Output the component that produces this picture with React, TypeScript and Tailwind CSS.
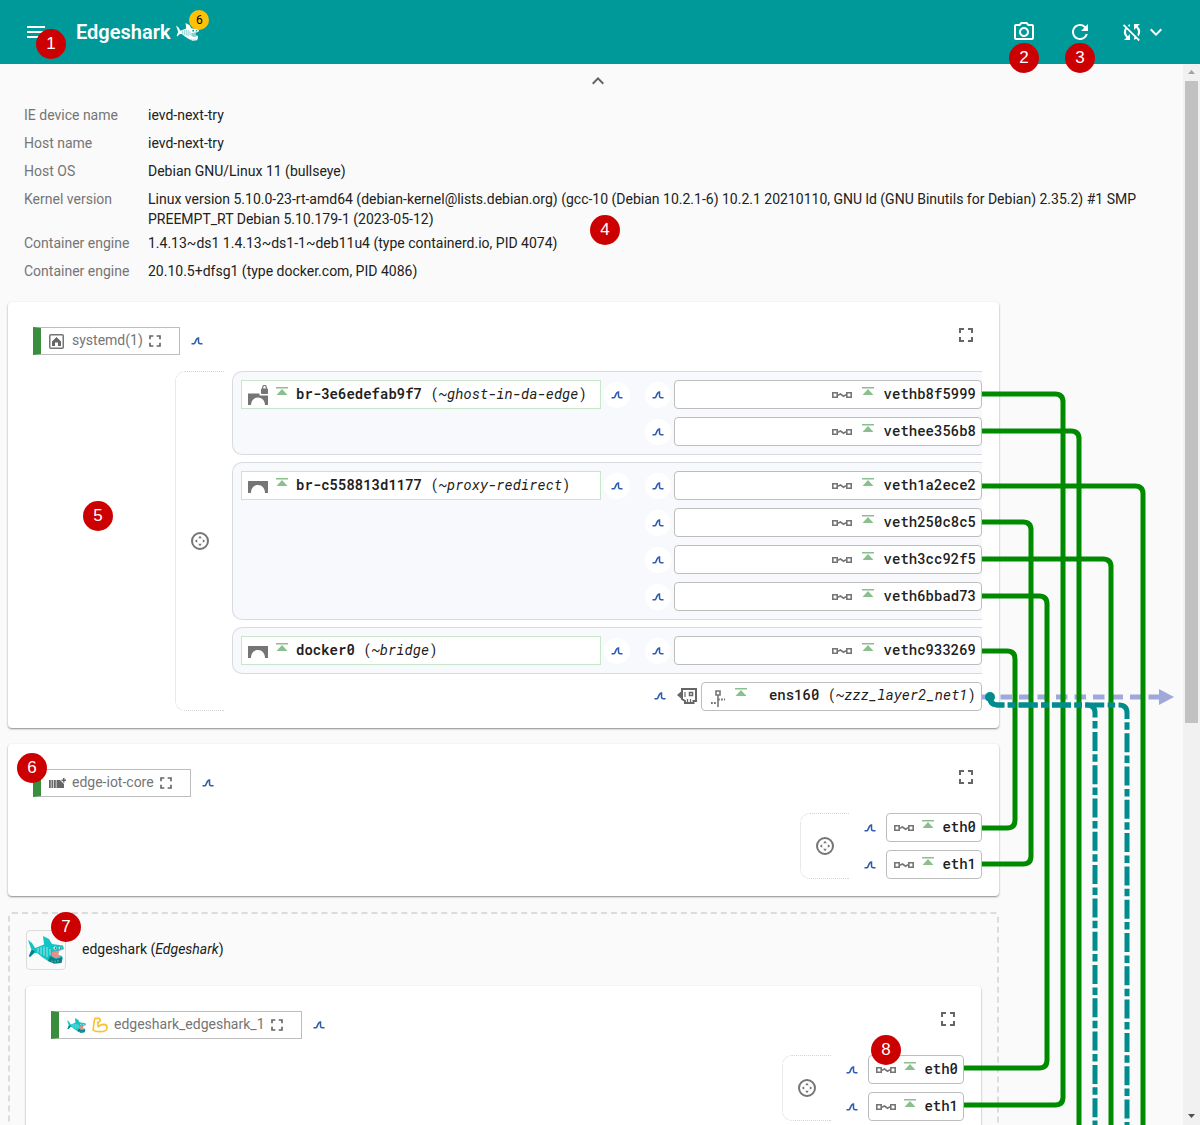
import type { ReactNode } from "react";
import {
  MdExpandLess,
  MdExpandMore,
  MdFullscreen,
  MdMenu,
  MdOutlinePhotoCamera,
  MdRefresh,
  MdSyncDisabled,
} from "react-icons/md";

const mono = "font-['Roboto_Mono','DejaVu_Sans_Mono',monospace]";

function Callout({ n, className }: { n: number; className: string }) {
  return (
    <span
      className={`absolute z-20 flex size-[30px] items-center justify-center rounded-full bg-[#cc0000] font-['Liberation_Sans',sans-serif] text-[17px] leading-4 text-white ${className}`}
    >
      {n}
    </span>
  );
}

function SharkIcon({ className, plain = false }: { className: string; plain?: boolean }) {
  const body = plain ? "#ffffff" : "#14c4c4";
  const stripe = plain ? "#009999" : "#d8f6f6";
  return (
    <svg viewBox="0 0 36 28" className={className} aria-hidden="true">
      <path
        d="M0 4 4 7 7 12 11 10.500 16 8.500 15 0 21 3 24 8 35 9.500 36 13 31 15 30 19 34 20 34.500 23 33 27 26 27.500 20 25 14 21 9 17 6 17 2 21 1 20 3.500 14Z"
        fill={body}
      />
      {!plain && <path d="M22 20 28 23 34.500 21 33.500 27 26 27.500 20 25ZM3.500 14l3.500 1-1 2-4 4-1-1Z" fill="#0a7f86" />}
      <path d="M24 16 32 14 30 17.500 32 21.500 27 22 24 20Z" fill={plain ? "#8cd0d0" : "#f08a8a"} />
      <path d="M10 12v4.500M13 11v7.500M16 10.500v9M19 11v10M22 13v6" stroke={stripe} strokeWidth="1" opacity="0.7" />
      <path d="M24 24.500v2M27 24.500v2M30 24v2" stroke={stripe} strokeWidth="0.800" opacity="0.6" />
      <circle cx="27" cy="12" r="1.500" fill={plain ? stripe : "#ffffff"} />
      <circle cx="32" cy="12" r="1.300" fill={plain ? stripe : "#ffffff"} />
      {!plain && <path d="M26.800 11.600h1.200v1.200h-1.200zM31.800 11.600h1.100v1.100h-1.100z" fill="#222222" />}
    </svg>
  );
}

function ArmIcon() {
  return (
    <svg viewBox="0 0 24 24" className="size-4 text-[#fbc02d]" fill="none" stroke="currentColor" strokeWidth="2.400" strokeLinejoin="round" aria-hidden="true">
      <path d="M4.500 2H11L12.500 5 10.500 8 8.500 8 9.500 15C11.500 12 14.500 11 18 11 21 11 22.500 13 22.500 16 22.500 20 18 22 12 22 7 22 2.500 21 1.500 19 3 13 2.500 7 4.500 2Z" />
    </svg>
  );
}

function HomeIcon() {
  return (
    <svg viewBox="0 0 15 15" className="size-[15px]" aria-hidden="true">
      <rect x="0.750" y="0.750" width="13.500" height="13.500" rx="1" fill="none" stroke="#757575" strokeWidth="1.500" />
      <path d="M3 7.500 7.500 3 12 7.500V12H9V8.500H6V12H3Z" fill="#666666" />
    </svg>
  );
}

function ContainerIcon() {
  return (
    <svg viewBox="0 0 17 11" className="h-[11px] w-[17px]" fill="#666666" aria-hidden="true">
      <path d="M0 2h1.800v8H0zM2.500 2h1.800v8H2.500zM5 2h1.800v8H5zM7.500 2H11L15 6v4H7.500zM14 0h1.500v1.500H17V3h-1.500v1.500H14V3h-1.500V1.500H14z" />
    </svg>
  );
}

function UpIcon() {
  return (
    <svg viewBox="0 0 12 8" className="mb-2 h-2 w-3 shrink-0" fill="#8bbf8d" aria-hidden="true">
      <path d="M0 0H12V1.500H0ZM6 2 11.500 8H0.500Z" />
    </svg>
  );
}

function VethIcon() {
  return (
    <svg viewBox="0 0 20 6" className="h-1.5 w-5 shrink-0" fill="none" stroke="#757575" strokeWidth="1.600" aria-hidden="true">
      <path d="M0.800 0.800H5.200V5.200H0.800ZM14.800 0.800H19.200V5.200H14.800ZM5.200 3H6.500L8.500 2 11.500 4.200 13.500 3H14.800" />
    </svg>
  );
}

function BridgeIcon({ locked = false }: { locked?: boolean }) {
  return (
    <svg viewBox="0 0 20 20" className="size-5 shrink-0" fill="#757575" aria-hidden="true">
      {locked ? (
        <>
          <path d="M0 8.500H11.500V10.500H20V20.500H17C17 15.500 14 12.500 10 12.500S3 15.500 3 20.500H0Z" />
          <rect x="13" y="3.500" width="7" height="5.500" rx="0.800" />
          <path d="M14.700 4V2.300a1.800 1.800 0 0 1 3.600 0V4" fill="none" stroke="#757575" strokeWidth="1.200" />
        </>
      ) : (
        <path d="M0 5H20V17H17C17 12.500 14 9 10 9S3 12.500 3 17H0Z" />
      )}
    </svg>
  );
}

function NicIcon() {
  return (
    <svg viewBox="0 0 20 16" className="h-4 w-5 shrink-0" fill="none" stroke="#666666" aria-hidden="true">
      <path d="M5 1H19V13H16.500V15H8V13L5 11Z" strokeWidth="2" />
      <path d="M0 7 4 3.500V10.500Z" fill="#666666" stroke="none" />
      <path d="M12.500 4.500H15.500V7.500H12.500Z" strokeWidth="1.500" />
      <path d="M8 4V9M10.500 11V14M13.500 11V14" strokeWidth="1.200" />
    </svg>
  );
}

function VlanIcon() {
  return (
    <svg viewBox="0 0 14 17" className="mt-1 h-[17px] w-3.5 shrink-0" fill="none" stroke="#757575" aria-hidden="true">
      <path d="M5 1H9V5H5Z" strokeWidth="1.600" />
      <path d="M7 5V17" strokeWidth="1.600" />
      <path d="M7 9.500H14M0 13H6" strokeWidth="1.800" strokeDasharray="1.800 1.200" />
    </svg>
  );
}

function NetnsIcon() {
  return (
    <svg viewBox="0 0 18 18" className="size-[18px]" aria-hidden="true">
      <circle cx="9" cy="9" r="8" fill="none" stroke="#757575" strokeWidth="2" />
      <path d="M9 3.800 10.800 6.200H7.200ZM9 14.200 10.800 11.800H7.200ZM3.800 9 6.200 7.200V10.800ZM14.200 9 11.800 7.200V10.800Z" fill="#757575" />
    </svg>
  );
}

function CaptureButton({ label }: { label: string }) {
  return (
    <button aria-label={`Capture from ${label}`} className="flex size-[26px] shrink-0 items-center justify-center rounded-full bg-white">
      <svg viewBox="0 0 12 8" className="h-2 w-3" fill="none" stroke="#2f5bae" strokeWidth="1.500" aria-hidden="true">
        <path d="M0.500 6.800H3C4.500 6.500 4.500 1.200 7.500 1V4.800C7.500 6.300 8.200 6.800 9.300 6.800H11.500" />
      </svg>
    </button>
  );
}

function Name({ name, alias, strong = false }: { name: string; alias?: string; strong?: boolean }) {
  return (
    <span className="pb-0.5 whitespace-pre">
      <b className={strong ? "font-semibold" : "font-medium"}>{name}</b>
      {alias && (
        <>
          {" ("}
          <i>~{alias}</i>)
        </>
      )}
    </span>
  );
}

function Port({ name, wide = false }: { name: string; wide?: boolean }) {
  return (
    <div className="flex items-center gap-[3px]">
      <CaptureButton label={name} />
      <div
        className={`flex h-[29px] items-center justify-end rounded-[4px] border border-[#bdbdbd] bg-white pr-[5px] ${wide ? "w-[308px] gap-2.5" : "w-24 gap-2"}`}
      >
        <VethIcon />
        <UpIcon />
        <Name name={name} />
      </div>
    </div>
  );
}

function Bridge({ name, alias, ports, locked }: { name: string; alias: string; ports: string[]; locked?: boolean }) {
  return (
    <section className="flex items-start justify-between rounded-l-[10px] border border-r-0 border-[#d8dae0] bg-[#f7f9fd] py-2 pl-2">
      <div className="flex items-center gap-[3px]">
        <div className="flex h-[29px] w-[360px] items-center gap-2 border border-[#c8e6c9] bg-white pl-1.5">
          <BridgeIcon locked={locked} />
          <UpIcon />
          <Name name={name} alias={alias} strong />
        </div>
        <CaptureButton label={name} />
      </div>
      <div className="flex flex-col gap-2">
        {ports.map((p) => (
          <Port key={p} name={p} wide />
        ))}
      </div>
    </section>
  );
}

function NetnsCard({
  icon,
  name,
  children,
  callout,
}: {
  icon: ReactNode;
  name: string;
  children: ReactNode;
  callout?: ReactNode;
}) {
  return (
    <section className="relative rounded-[4px] bg-white pt-[25px] pr-[17px] pb-[17px] pl-[25px] shadow-[0_1px_2px_rgba(0,0,0,0.45)]">
      {callout}
      <div className="mb-4 flex h-7 items-start justify-between">
        <div className="flex items-center gap-1">
          <button className="flex h-7 items-center border border-l-8 border-[#bdbdbd] border-l-[#388e3c] pr-3.5 pl-2 text-sm text-[#757575]">
            <span className="flex min-w-[23px] items-center gap-1.5 pr-1.5">{icon}</span>
            <span className="pr-0.5 pb-0.5">{name}</span>
            <MdFullscreen className="size-5 text-[#666666]" />
          </button>
          <CaptureButton label={name} />
        </div>
        <button aria-label={`Show only ${name}`} className="mr-1 -mt-1 text-[#666666]">
          <MdFullscreen className="size-6" />
        </button>
      </div>
      <div className="flex justify-end gap-2">
        <div className="flex w-[49px] items-center justify-center rounded-l-[10px] border border-r-0 border-dotted border-[#d4d4d4]">
          <NetnsIcon />
        </div>
        {children}
      </div>
    </section>
  );
}

const wires = [
  "M982 394H1055Q1063 394 1063 402V1097Q1063 1105 1055 1105H964",
  "M982 431H1071Q1079 431 1079 439V1125",
  "M982 486H1135Q1143 486 1143 494V1125",
  "M982 522H1023Q1031 522 1031 530V856Q1031 864 1023 864H982",
  "M982 559H1103Q1111 559 1111 567V1125",
  "M982 596H1039Q1047 596 1047 604V1060Q1047 1068 1039 1068H964",
  "M982 651H1007Q1015 651 1015 659V820Q1015 828 1007 828H982",
];

function Wires() {
  return (
    <svg viewBox="963 302 220 823" className="pointer-events-none absolute top-0 right-0 h-[823px] w-[220px]" fill="none" aria-hidden="true">
      <path d="M982 697H1159" stroke="#9fa8da" strokeWidth="5" strokeDasharray="11.500 7" />
      <path d="M1159 689 1174 697 1159 705Z" fill="#9fa8da" />
      {wires.map((d) => (
        <path key={d} d={d} stroke="#008a00" strokeWidth="5" />
      ))}
      <g stroke="#008c8c" strokeWidth="5" strokeDasharray="19 3.400 7.500 3.400">
        <path d="M990 697Q990 705 998 705H1087Q1095 705 1095 713V1125" />
        <path d="M990 697Q990 705 998 705H1119Q1127 705 1127 713V1125" />
      </g>
      <circle cx="990" cy="697" r="5" fill="#008c8c" />
    </svg>
  );
}

const details: [string, string][] = [
  ["IE device name", "ievd-next-try"],
  ["Host name", "ievd-next-try"],
  ["Host OS", "Debian GNU/Linux 11 (bullseye)"],
  [
    "Kernel version",
    "Linux version 5.10.0-23-rt-amd64 (debian-kernel@lists.debian.org) (gcc-10 (Debian 10.2.1-6) 10.2.1 20210110, GNU ld (GNU Binutils for Debian) 2.35.2) #1 SMP PREEMPT_RT Debian 5.10.179-1 (2023-05-12)",
  ],
  ["Container engine", "1.4.13~ds1 1.4.13~ds1-1~deb11u4 (type containerd.io, PID 4074)"],
  ["Container engine", "20.10.5+dfsg1 (type docker.com, PID 4086)"],
];

export default function App() {
  return (
    <div className="flex h-screen flex-col bg-[#fafafa] font-['Roboto',sans-serif] text-sm text-[#212121]">
      <header className="flex h-16 shrink-0 items-center justify-between bg-[#009999] pr-9 pl-6 text-white">
        <div className="flex items-center">
          <button aria-label="Menu" className="relative">
            <MdMenu className="size-6" />
            <Callout n={1} className="top-[9px] left-3" />
          </button>
          <h1 className="ml-7 text-xl font-semibold">Edgeshark</h1>
          <span className="relative ml-1.5">
            <SharkIcon plain className="h-[18px] w-[23px]" />
            <span className="absolute -top-[13px] left-[13px] flex size-5 items-center justify-center rounded-full bg-[#ffc107] text-xs text-black">
              6
            </span>
          </span>
        </div>
        <div className="flex items-center">
          <button aria-label="Screenshot" className="relative mr-8">
            <MdOutlinePhotoCamera className="size-6" />
            <Callout n={2} className="top-[23px] -left-[3px]" />
          </button>
          <button aria-label="Refresh" className="relative mr-7">
            <MdRefresh className="size-6" />
            <Callout n={3} className="top-[23px] -left-[3px]" />
          </button>
          <button aria-label="Automatic refresh" className="-mr-1 flex items-center">
            <MdSyncDisabled className="size-6" />
            <MdExpandMore className="size-6" />
          </button>
        </div>
      </header>
      <div className="flex min-h-0 flex-1">
        <main className="min-w-0 flex-1 overflow-hidden">
          <div className="flex justify-center pt-[5px] pl-3">
            <button aria-label="Hide details" className="text-[#616161]">
              <MdExpandLess className="size-6" />
            </button>
          </div>
          <div className="relative mt-3 pr-4 pl-6">
            <dl className="flex flex-col leading-5">
              {details.map(([label, value], i) => (
                <div key={i} className={i === 3 ? "flex pb-1" : "flex pb-2"}>
                  <dt className="w-[124px] shrink-0 text-[#757575]">{label}</dt>
                  <dd>{value}</dd>
                </div>
              ))}
            </dl>
            <Callout n={4} className="top-[110px] left-[590px]" />
          </div>
          <div className="relative mt-[13px] pr-[184px] pl-2">
            <div className="flex flex-col gap-4">
              <NetnsCard icon={<HomeIcon />} name="systemd(1)" callout={<Callout n={5} className="top-[199px] left-[75px]" />}>
                <div className={`flex w-[750px] flex-col gap-[7px] ${mono}`}>
                  <Bridge name="br-3e6edefab9f7" alias="ghost-in-da-edge" ports={["vethb8f5999", "vethee356b8"]} locked />
                  <Bridge name="br-c558813d1177" alias="proxy-redirect" ports={["veth1a2ece2", "veth250c8c5", "veth3cc92f5", "veth6bbad73"]} />
                  <Bridge name="docker0" alias="bridge" ports={["vethc933269"]} />
                  <div className="flex h-[30px] items-center justify-end gap-1">
                    <CaptureButton label="ens160" />
                    <NicIcon />
                    <div className="flex h-[29px] w-[281px] items-center gap-2.5 rounded-[4px] border border-[#bdbdbd] bg-white pr-[5px] pl-[9px]">
                      <VlanIcon />
                      <UpIcon />
                      <span className="ml-auto flex">
                        <Name name="ens160" alias="zzz_layer2_net1" />
                      </span>
                    </div>
                  </div>
                </div>
              </NetnsCard>
              <NetnsCard icon={<ContainerIcon />} name="edge-iot-core" callout={<Callout n={6} className="top-[9px] left-[9px]" />}>
                <div className={`flex flex-col gap-2 ${mono}`}>
                  <Port name="eth0" />
                  <Port name="eth1" />
                </div>
              </NetnsCard>
              <section className="rounded-[4px] border-2 border-dashed border-[#dcdcdc] p-4">
                <div className="mb-4 flex items-center gap-4">
                  <div className="relative flex size-10 items-center justify-center rounded-[4px] border border-[#dcdcdc]">
                    <SharkIcon className="h-7 w-9" />
                    <Callout n={7} className="-top-[19px] left-6" />
                  </div>
                  <h2 className="pb-0.5">
                    edgeshark (<i>Edgeshark</i>)
                  </h2>
                </div>
                <NetnsCard
                  icon={
                    <>
                      <SharkIcon className="h-[15px] w-[19px]" />
                      <ArmIcon />
                    </>
                  }
                  name="edgeshark_edgeshark_1"
                >
                  <div className={`relative flex flex-col gap-2 ${mono}`}>
                    <Port name="eth0" />
                    <Port name="eth1" />
                    <Callout n={8} className="-top-5 left-8" />
                  </div>
                </NetnsCard>
              </section>
            </div>
            <Wires />
          </div>
        </main>
        <div aria-hidden="true" className="flex w-[17px] shrink-0 flex-col items-center bg-[#f1f1f1]">
          <svg viewBox="0 0 17 17" className="size-[17px]" fill="#a3a3a3">
            <path d="M8.500 6 12 10H5Z" />
          </svg>
          <div className="flex w-full flex-1 justify-center">
            <div className="h-[62.5%] w-[13px] bg-[#c1c1c1]" />
          </div>
          <svg viewBox="0 0 17 17" className="size-[17px]" fill="#505050">
            <path d="M5 6H12L8.500 10Z" />
          </svg>
        </div>
      </div>
    </div>
  );
}
